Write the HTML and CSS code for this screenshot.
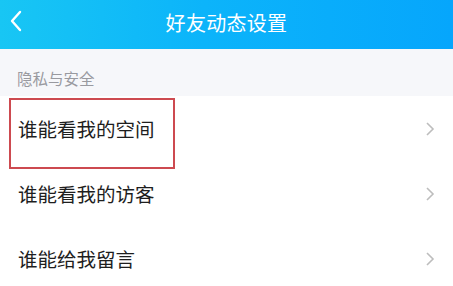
FILE: index.html
```html
<!DOCTYPE html>
<html lang="zh">
<head>
<meta charset="utf-8">
<link rel="stylesheet" href="styles.css">
</head>
<body>
<header class="bar">
  <svg class="back" width="14" height="22" viewBox="0 0 14 22"><path d="M11 2 L3 11 L11 20" fill="none" stroke="#fff" stroke-width="2.4" stroke-linecap="round" stroke-linejoin="round"/></svg>
  <div class="title">好友动态设置</div>
</header>
<div class="section">隐私与安全</div>
<ul class="list">
  <li class="row"><span>谁能看我的空间</span><svg class="chev" width="10" height="16" viewBox="0 0 10 16"><path d="M2 2 L8 8 L2 14" fill="none" stroke="#bdbdbd" stroke-width="1.6"/></svg><div class="mark"></div></li>
  <li class="row"><span>谁能看我的访客</span><svg class="chev" width="10" height="16" viewBox="0 0 10 16"><path d="M2 2 L8 8 L2 14" fill="none" stroke="#bdbdbd" stroke-width="1.6"/></svg></li>
  <li class="row"><span>谁能给我留言</span><svg class="chev" width="10" height="16" viewBox="0 0 10 16"><path d="M2 2 L8 8 L2 14" fill="none" stroke="#bdbdbd" stroke-width="1.6"/></svg></li>
</ul>
</body>
</html>
```
FILE: styles.css
```css
html, body { margin: 0; padding: 0; }
body {
  width: 453px; height: 286px; overflow: hidden; background: #fff;
  font-family: "Noto Sans CJK SC", "Noto Sans", sans-serif;
}
.bar {
  height: 49px; position: relative;
  background: linear-gradient(90deg, #18c6f4 0%, #0cb4fa 45%, #06a6fc 100%);
  display: flex; align-items: center; justify-content: center;
}
.back { position: absolute; left: 9px; top: 10px; }
.title { color: #fff; font-size: 20px; line-height: 1; margin-top: -4px; letter-spacing: 0.3px; }
.section {
  height: 47px; background: #f6f7fa; color: #999aa0; font-size: 15.5px;
  padding-left: 17px; box-sizing: border-box; padding-top: 20px; line-height: 1.2;
}
.list { list-style: none; margin: 0; padding: 0; }
.row {
  position: relative; height: 65px; display: flex; align-items: center;
  justify-content: space-between; padding: 0 18px 0 18px; font-size: 19.5px; color: #1e1e1e;
}
.row span { margin-top: -1px; }
.chev { margin-right: 0; }
.mark {
  position: absolute; left: 9px; top: 2px; width: 162px; height: 67px;
  border: 2px solid #cd4a50;
}
```
